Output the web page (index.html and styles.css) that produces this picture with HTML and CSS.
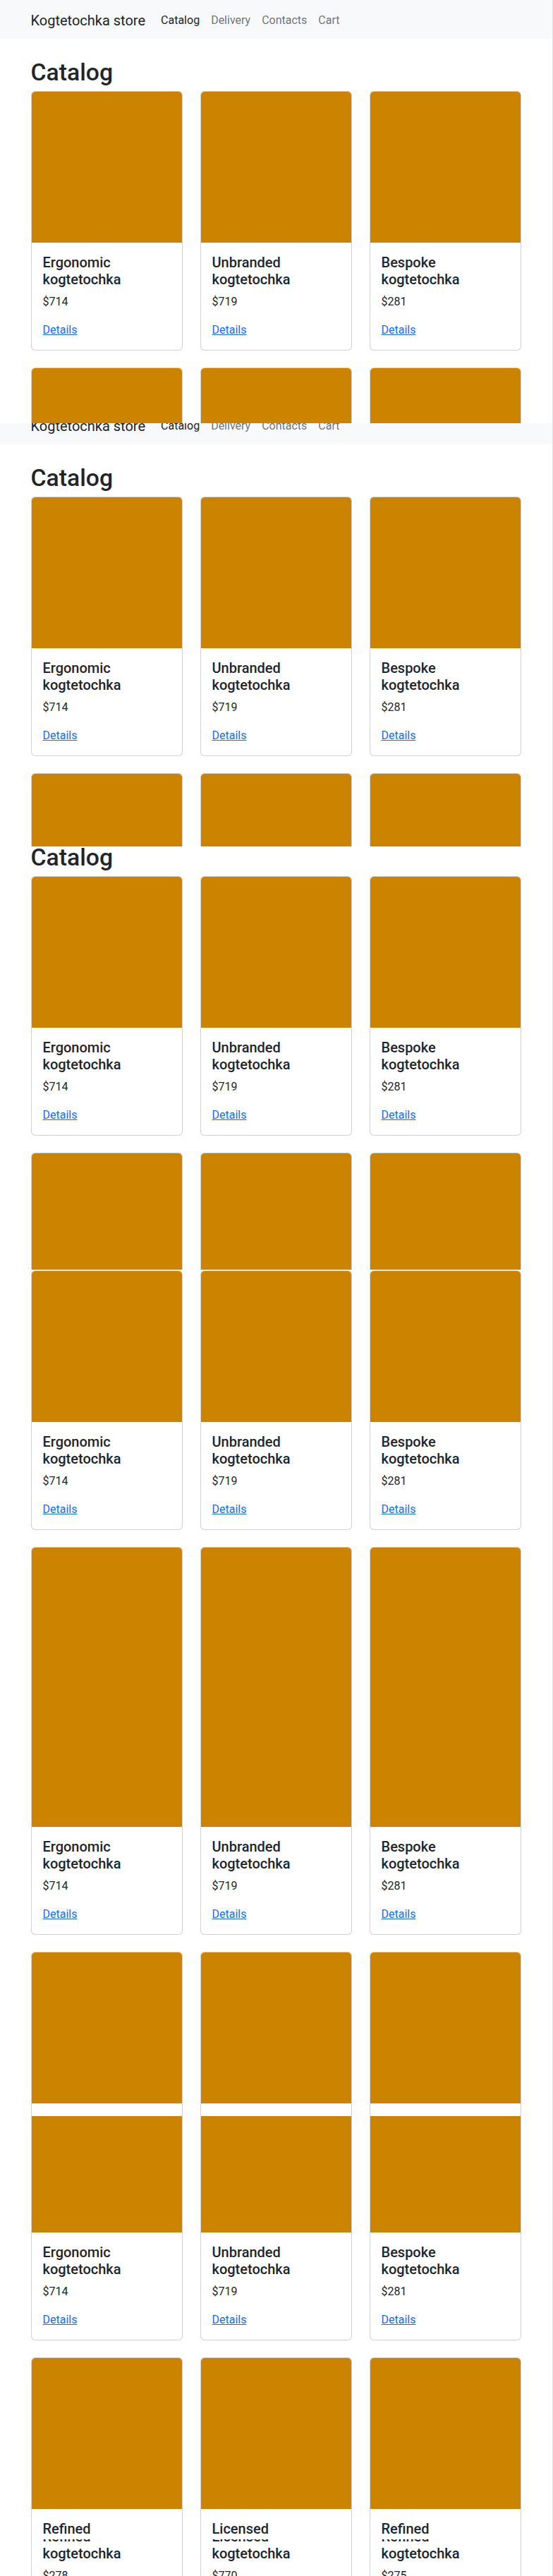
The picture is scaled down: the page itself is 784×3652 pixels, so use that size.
FILE: index.html
```html
<!DOCTYPE html>
<html lang="en">
<head>
<meta charset="utf-8">
<title>Kogtetochka store — Catalog</title>
<link rel="stylesheet" href="styles.css">
</head>
<body>
<div class="shot">

  <section class="seg s1">
    <div class="page">
      <nav class="navbar"><div class="container nav-inner"><a class="brand" href="#">Kogtetochka store</a><ul class="nav"><li><a class="nav-link active" href="#">Catalog</a></li><li><a class="nav-link" href="#">Delivery</a></li><li><a class="nav-link" href="#">Contacts</a></li><li><a class="nav-link" href="#">Cart</a></li></ul></div></nav>
      <main class="container main">
        <h1 class="title">Catalog</h1>
        <div class="grid">
          <div class="card"><div class="card-img"></div><div class="card-body"><h5 class="card-title">Ergonomic kogtetochka</h5><p class="price">$714</p><a class="details" href="#">Details</a></div></div>
          <div class="card"><div class="card-img"></div><div class="card-body"><h5 class="card-title">Unbranded kogtetochka</h5><p class="price">$719</p><a class="details" href="#">Details</a></div></div>
          <div class="card"><div class="card-img"></div><div class="card-body"><h5 class="card-title">Bespoke kogtetochka</h5><p class="price">$281</p><a class="details" href="#">Details</a></div></div>
          <div class="card"><div class="card-img"></div><div class="card-body"><h5 class="card-title">Refined kogtetochka</h5><p class="price">$278</p><a class="details" href="#">Details</a></div></div>
          <div class="card"><div class="card-img"></div><div class="card-body"><h5 class="card-title">Licensed kogtetochka</h5><p class="price">$770</p><a class="details" href="#">Details</a></div></div>
          <div class="card"><div class="card-img"></div><div class="card-body"><h5 class="card-title">Refined kogtetochka</h5><p class="price">$275</p><a class="details" href="#">Details</a></div></div>
        </div>
      </main>
    </div>
  </section>

  <section class="seg s2">
    <div class="page">
      <nav class="navbar"><div class="container nav-inner"><a class="brand" href="#">Kogtetochka store</a><ul class="nav"><li><a class="nav-link active" href="#">Catalog</a></li><li><a class="nav-link" href="#">Delivery</a></li><li><a class="nav-link" href="#">Contacts</a></li><li><a class="nav-link" href="#">Cart</a></li></ul></div></nav>
      <main class="container main">
        <h1 class="title">Catalog</h1>
        <div class="grid">
          <div class="card"><div class="card-img"></div><div class="card-body"><h5 class="card-title">Ergonomic kogtetochka</h5><p class="price">$714</p><a class="details" href="#">Details</a></div></div>
          <div class="card"><div class="card-img"></div><div class="card-body"><h5 class="card-title">Unbranded kogtetochka</h5><p class="price">$719</p><a class="details" href="#">Details</a></div></div>
          <div class="card"><div class="card-img"></div><div class="card-body"><h5 class="card-title">Bespoke kogtetochka</h5><p class="price">$281</p><a class="details" href="#">Details</a></div></div>
          <div class="card"><div class="card-img"></div><div class="card-body"><h5 class="card-title">Refined kogtetochka</h5><p class="price">$278</p><a class="details" href="#">Details</a></div></div>
          <div class="card"><div class="card-img"></div><div class="card-body"><h5 class="card-title">Licensed kogtetochka</h5><p class="price">$770</p><a class="details" href="#">Details</a></div></div>
          <div class="card"><div class="card-img"></div><div class="card-body"><h5 class="card-title">Refined kogtetochka</h5><p class="price">$275</p><a class="details" href="#">Details</a></div></div>
        </div>
      </main>
    </div>
  </section>

  <section class="seg s3">
    <div class="page">
      <nav class="navbar"><div class="container nav-inner"><a class="brand" href="#">Kogtetochka store</a><ul class="nav"><li><a class="nav-link active" href="#">Catalog</a></li><li><a class="nav-link" href="#">Delivery</a></li><li><a class="nav-link" href="#">Contacts</a></li><li><a class="nav-link" href="#">Cart</a></li></ul></div></nav>
      <main class="container main">
        <h1 class="title">Catalog</h1>
        <div class="grid">
          <div class="card"><div class="card-img"></div><div class="card-body"><h5 class="card-title">Ergonomic kogtetochka</h5><p class="price">$714</p><a class="details" href="#">Details</a></div></div>
          <div class="card"><div class="card-img"></div><div class="card-body"><h5 class="card-title">Unbranded kogtetochka</h5><p class="price">$719</p><a class="details" href="#">Details</a></div></div>
          <div class="card"><div class="card-img"></div><div class="card-body"><h5 class="card-title">Bespoke kogtetochka</h5><p class="price">$281</p><a class="details" href="#">Details</a></div></div>
          <div class="card"><div class="card-img"></div><div class="card-body"><h5 class="card-title">Refined kogtetochka</h5><p class="price">$278</p><a class="details" href="#">Details</a></div></div>
          <div class="card"><div class="card-img"></div><div class="card-body"><h5 class="card-title">Licensed kogtetochka</h5><p class="price">$770</p><a class="details" href="#">Details</a></div></div>
          <div class="card"><div class="card-img"></div><div class="card-body"><h5 class="card-title">Refined kogtetochka</h5><p class="price">$275</p><a class="details" href="#">Details</a></div></div>
        </div>
      </main>
    </div>
  </section>

  <section class="seg s4">
    <div class="page">
      <nav class="navbar"><div class="container nav-inner"><a class="brand" href="#">Kogtetochka store</a><ul class="nav"><li><a class="nav-link active" href="#">Catalog</a></li><li><a class="nav-link" href="#">Delivery</a></li><li><a class="nav-link" href="#">Contacts</a></li><li><a class="nav-link" href="#">Cart</a></li></ul></div></nav>
      <main class="container main">
        <h1 class="title">Catalog</h1>
        <div class="grid">
          <div class="card"><div class="card-img"></div><div class="card-body"><h5 class="card-title">Ergonomic kogtetochka</h5><p class="price">$714</p><a class="details" href="#">Details</a></div></div>
          <div class="card"><div class="card-img"></div><div class="card-body"><h5 class="card-title">Unbranded kogtetochka</h5><p class="price">$719</p><a class="details" href="#">Details</a></div></div>
          <div class="card"><div class="card-img"></div><div class="card-body"><h5 class="card-title">Bespoke kogtetochka</h5><p class="price">$281</p><a class="details" href="#">Details</a></div></div>
          <div class="card"><div class="card-img"></div><div class="card-body"><h5 class="card-title">Refined kogtetochka</h5><p class="price">$278</p><a class="details" href="#">Details</a></div></div>
          <div class="card"><div class="card-img"></div><div class="card-body"><h5 class="card-title">Licensed kogtetochka</h5><p class="price">$770</p><a class="details" href="#">Details</a></div></div>
          <div class="card"><div class="card-img"></div><div class="card-body"><h5 class="card-title">Refined kogtetochka</h5><p class="price">$275</p><a class="details" href="#">Details</a></div></div>
        </div>
      </main>
    </div>
  </section>

  <section class="seg s5">
    <div class="page">
      <nav class="navbar"><div class="container nav-inner"><a class="brand" href="#">Kogtetochka store</a><ul class="nav"><li><a class="nav-link active" href="#">Catalog</a></li><li><a class="nav-link" href="#">Delivery</a></li><li><a class="nav-link" href="#">Contacts</a></li><li><a class="nav-link" href="#">Cart</a></li></ul></div></nav>
      <main class="container main">
        <h1 class="title">Catalog</h1>
        <div class="grid">
          <div class="card"><div class="card-img"></div><div class="card-body"><h5 class="card-title">Ergonomic kogtetochka</h5><p class="price">$714</p><a class="details" href="#">Details</a></div></div>
          <div class="card"><div class="card-img"></div><div class="card-body"><h5 class="card-title">Unbranded kogtetochka</h5><p class="price">$719</p><a class="details" href="#">Details</a></div></div>
          <div class="card"><div class="card-img"></div><div class="card-body"><h5 class="card-title">Bespoke kogtetochka</h5><p class="price">$281</p><a class="details" href="#">Details</a></div></div>
          <div class="card"><div class="card-img"></div><div class="card-body"><h5 class="card-title">Refined kogtetochka</h5><p class="price">$278</p><a class="details" href="#">Details</a></div></div>
          <div class="card"><div class="card-img"></div><div class="card-body"><h5 class="card-title">Licensed kogtetochka</h5><p class="price">$770</p><a class="details" href="#">Details</a></div></div>
          <div class="card"><div class="card-img"></div><div class="card-body"><h5 class="card-title">Refined kogtetochka</h5><p class="price">$275</p><a class="details" href="#">Details</a></div></div>
        </div>
      </main>
    </div>
  </section>

  <section class="seg s6">
    <div class="page">
      <nav class="navbar"><div class="container nav-inner"><a class="brand" href="#">Kogtetochka store</a><ul class="nav"><li><a class="nav-link active" href="#">Catalog</a></li><li><a class="nav-link" href="#">Delivery</a></li><li><a class="nav-link" href="#">Contacts</a></li><li><a class="nav-link" href="#">Cart</a></li></ul></div></nav>
      <main class="container main">
        <h1 class="title">Catalog</h1>
        <div class="grid">
          <div class="card"><div class="card-img"></div><div class="card-body"><h5 class="card-title">Ergonomic kogtetochka</h5><p class="price">$714</p><a class="details" href="#">Details</a></div></div>
          <div class="card"><div class="card-img"></div><div class="card-body"><h5 class="card-title">Unbranded kogtetochka</h5><p class="price">$719</p><a class="details" href="#">Details</a></div></div>
          <div class="card"><div class="card-img"></div><div class="card-body"><h5 class="card-title">Bespoke kogtetochka</h5><p class="price">$281</p><a class="details" href="#">Details</a></div></div>
          <div class="card"><div class="card-img"></div><div class="card-body"><h5 class="card-title">Refined kogtetochka</h5><p class="price">$278</p><a class="details" href="#">Details</a></div></div>
          <div class="card"><div class="card-img"></div><div class="card-body"><h5 class="card-title">Licensed kogtetochka</h5><p class="price">$770</p><a class="details" href="#">Details</a></div></div>
          <div class="card"><div class="card-img"></div><div class="card-body"><h5 class="card-title">Refined kogtetochka</h5><p class="price">$275</p><a class="details" href="#">Details</a></div></div>
        </div>
      </main>
    </div>
  </section>

  <section class="seg s7">
    <div class="page">
      <nav class="navbar"><div class="container nav-inner"><a class="brand" href="#">Kogtetochka store</a><ul class="nav"><li><a class="nav-link active" href="#">Catalog</a></li><li><a class="nav-link" href="#">Delivery</a></li><li><a class="nav-link" href="#">Contacts</a></li><li><a class="nav-link" href="#">Cart</a></li></ul></div></nav>
      <main class="container main">
        <h1 class="title">Catalog</h1>
        <div class="grid">
          <div class="card"><div class="card-img"></div><div class="card-body"><h5 class="card-title">Ergonomic kogtetochka</h5><p class="price">$714</p><a class="details" href="#">Details</a></div></div>
          <div class="card"><div class="card-img"></div><div class="card-body"><h5 class="card-title">Unbranded kogtetochka</h5><p class="price">$719</p><a class="details" href="#">Details</a></div></div>
          <div class="card"><div class="card-img"></div><div class="card-body"><h5 class="card-title">Bespoke kogtetochka</h5><p class="price">$281</p><a class="details" href="#">Details</a></div></div>
          <div class="card"><div class="card-img"></div><div class="card-body"><h5 class="card-title">Refined kogtetochka</h5><p class="price">$278</p><a class="details" href="#">Details</a></div></div>
          <div class="card"><div class="card-img"></div><div class="card-body"><h5 class="card-title">Licensed kogtetochka</h5><p class="price">$770</p><a class="details" href="#">Details</a></div></div>
          <div class="card"><div class="card-img"></div><div class="card-body"><h5 class="card-title">Refined kogtetochka</h5><p class="price">$275</p><a class="details" href="#">Details</a></div></div>
        </div>
      </main>
    </div>
  </section>

</div>
</body>
</html>
```
FILE: styles.css
```css
* { box-sizing: border-box; }

html, body {
  margin: 0;
  padding: 0;
  background: #ffffff;
}

body {
  font-family: Roboto, "Liberation Sans", Arial, sans-serif;
  font-size: 16px;
  line-height: 24px;
  color: #212529;
}

.shot {
  width: 784px;
}

/* each captured strip of the stitched screenshot */
.seg {
  height: 600px;
  overflow: hidden;
  border-right: 1px solid #e3e3e3;
}
.s1 .page { margin-top: 0; }
.s2 .page { margin-top: -25px; }
.s3 .page { margin-top: -87px; }
.s4 .page { margin-top: -128px; }
.s5 .page { margin-top: -154px; }
.s6 .page { margin-top: -179px; }
.s7 { height: 52px; }
.s7 .page { margin-top: -768px; }

.page {
  width: 783px;
  background: #ffffff;
}

.container {
  width: 720px;
  margin: 0 auto;
  padding: 0 12px;
}

/* navbar */
.navbar {
  height: 55px;
  background: #f8f9fa;
}
.nav-inner {
  display: flex;
  align-items: flex-start;
  height: 55px;
  padding-top: 14px;
}
.brand {
  font-size: 20px;
  line-height: 30px;
  color: #212529;
  text-decoration: none;
  margin-right: 14px;
  white-space: nowrap;
}
.nav {
  display: flex;
  list-style: none;
  margin: 0;
  padding: 0;
  padding-top: 3px;
}
.nav-link {
  display: block;
  padding: 0 8px;
  font-size: 16px;
  line-height: 24px;
  color: rgba(33, 37, 41, 0.65);
  text-decoration: none;
  white-space: nowrap;
}
.nav-link.active {
  color: #212529;
}

/* main */
.main {
  padding-top: 29px;
}
.title {
  margin: 0 0 7px;
  font-size: 33.76px;
  line-height: 38px;
  font-weight: 500;
  color: #212529;
}

.grid {
  display: grid;
  grid-template-columns: repeat(3, 215px);
  column-gap: 25px;
  row-gap: 24px;
}

.card {
  border: 1px solid rgba(0, 0, 0, 0.175);
  border-radius: 6px;
  overflow: hidden;
  background: #ffffff;
}
.card-img {
  height: 214px;
  background: #cc8400;
}
.card-body {
  padding: 16px;
}
.card-title {
  margin: 0 0 8px;
  font-size: 20px;
  line-height: 24px;
  font-weight: 500;
  color: #212529;
}
.price {
  margin: 0 0 16px;
  font-size: 16px;
  line-height: 24px;
}
.details {
  color: #0d6efd;
  text-decoration: underline;
  font-size: 16px;
  line-height: 24px;
}
```
